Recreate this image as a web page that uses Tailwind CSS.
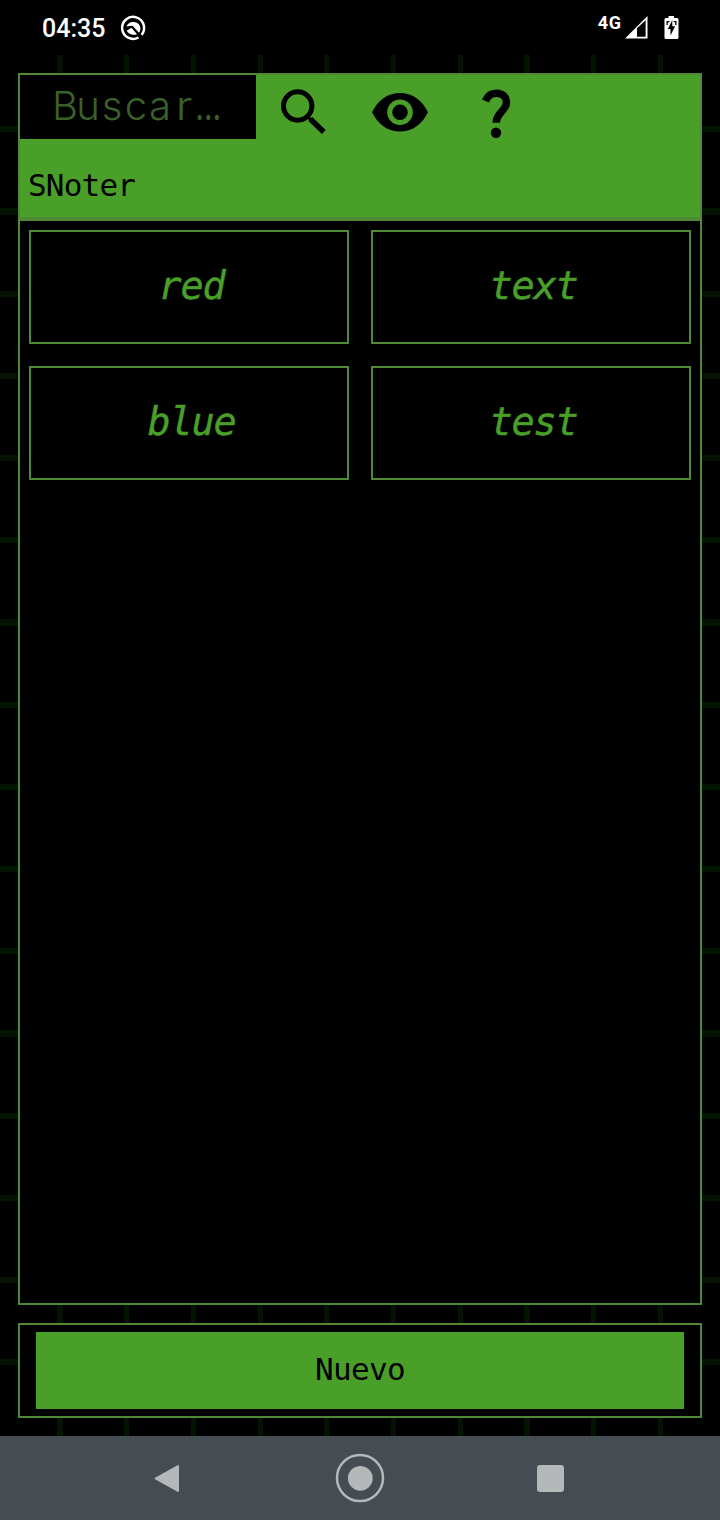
<!DOCTYPE html>
<html lang="es">
<head>
<meta charset="utf-8">
<title>SNoter</title>
<script src="https://cdn.jsdelivr.net/npm/@tailwindcss/browser@4"></script>
</head>
<body class="bg-black">
<div class="flex h-[1520px] w-[720px] flex-col overflow-hidden bg-black font-['DejaVu_Sans_Mono',monospace]">
  <!-- Status bar -->
  <header class="flex h-[55px] shrink-0 items-center pr-[41px] pl-[42px] font-[Roboto,sans-serif] text-white">
    <span class="w-[63px] pt-[2px] text-[25px] leading-[55px] font-medium whitespace-nowrap">04:35</span>
    <svg class="ml-[14px] h-7 w-7" viewBox="0 0 28 28" fill="none" stroke="#fff">
      <path d="M22.600 20.900A11 11 0 1 0 19.500 23.500" stroke-width="2.500"/>
      <path d="M7.500 12.500A7.300 7.300 0 0 1 21.500 14.500Q21.300 17 20 18.800L13.500 11.800Z" fill="#fff" stroke="none"/>
      <path d="M7.600 16.800L12.500 13.800L18 20.200Q11.500 22.500 7.600 16.800Z" fill="#fff" stroke="none"/>
    </svg>
    <span class="mb-[9px] ml-auto text-[18px] leading-5 font-bold tracking-[0.600px]">4G</span>
    <svg class="ml-[3px] h-[23px] w-[23px]" viewBox="0 0 23 23"><path d="M0 22.500L22.500 0v22.500z" fill="#fff"/><path d="M12 12.200L20.600 4.300v16.400H12z" fill="#000"/></svg>
    <svg class="mr-[0.500px] ml-4 h-6 w-[15px]" viewBox="0 0 15 24"><path d="M4.500 0h5.500v2h3a1.500 1.500 0 0 1 1.500 1.500v18A1.500 1.500 0 0 1 13 23H2A1.500 1.500 0 0 1 .5 21.500v-18A1.500 1.500 0 0 1 2 2h2.500z" fill="#fff"/><path d="M8.300 4L3.800 13h2.700v6.500l4.600-9.200H8.300zM2.500 5h3v1.300H3.800V9H2.500zM9.800 5h2.700v4h-1.300V6.300H9.800z" fill="#000"/></svg>
  </header>

  <!-- App area over a grid backdrop -->
  <main class="flex min-h-0 flex-1 flex-col gap-[18px] bg-[repeating-linear-gradient(90deg,transparent_0_57.500px,#031400_57.500px_62.700px,transparent_62.700px_66.700px),repeating-linear-gradient(180deg,transparent_0_71.200px,#031400_71.200px_77.400px,transparent_77.400px_82.200px)] p-[18px]">
    <section class="flex min-h-0 flex-1 flex-col border-2 border-[#4f8836] bg-black">
      <div class="flex h-[146px] shrink-0 flex-col border-b-4 border-[#4f8836] bg-[#4a9f29]">
        <div class="flex h-16">
          <div class="flex w-[236px] bg-black pl-8 font-[Inter,sans-serif] text-[40px] leading-[62px] font-light text-[#3a6129]"><span class="w-6 text-center">B</span><span class="w-6 text-center">u</span><span class="w-6 text-center">s</span><span class="w-6 text-center">c</span><span class="w-6 text-center">a</span><span class="w-6 scale-x-115 text-center">r</span><span class="flex w-6 justify-center font-normal"><span class="scale-x-[0.750]">…</span></span></div>
          <svg class="ml-6 h-16 w-12" viewBox="280 75 48 64" fill="none" stroke="#000"><circle cx="297.700" cy="106" r="14.200" stroke-width="5"/><path d="M307 116l4 4" stroke-width="3"/><path d="M310.300 119l13.500 13" stroke-width="5.500"/></svg>
          <svg class="ml-10 h-16 w-16" viewBox="368 75 64 64"><path d="M372 112.300C378 100 388 93 400 93s22 7 28 19.300c-6 12.300-16 19.300-28 19.300s-22-7-28-19.300z"/><circle cx="400" cy="112.300" r="10.300" fill="none" stroke="#4a9f29" stroke-width="5"/></svg>
          <svg class="ml-11 h-16 w-10" viewBox="476 75 40 64"><path d="M485.500 101C487.500 96 491 93.200 496.300 93.200C502.500 93.200 506.500 97 506.500 102.500C506.500 111 496.300 112 496.300 122.700" fill="none" stroke="#000" stroke-width="7.600"/><circle cx="496" cy="132.800" r="5.200"/></svg>
        </div>
        <h1 class="pt-7 pl-2 text-[31px] leading-[37px] tracking-[-0.800px]">SNoter</h1>
      </div>
      <div class="grid grid-cols-2 gap-[22px] p-[9px] text-[38.500px] tracking-[-1.200px] text-[#4a9f29] italic [-webkit-text-stroke:0.400px_#4a9f29]">
        <div class="flex h-[114px] items-center justify-center border-2 border-[#4f8836] pb-0.5 pl-[5px]">red</div>
        <div class="flex h-[114px] items-center justify-center border-2 border-[#4f8836] pb-0.5 pl-[5px]">text</div>
        <div class="flex h-[114px] items-center justify-center border-2 border-[#4f8836] pb-0.5 pl-[5px]">blue</div>
        <div class="flex h-[114px] items-center justify-center border-2 border-[#4f8836] pb-0.5 pl-[5px]">test</div>
      </div>
    </section>
    <section class="flex h-[95px] shrink-0 border-2 border-[#4f8836] bg-black px-4 pt-[7px] pb-[7px]">
      <button class="flex-1 bg-[#4a9f29] pb-0.5 text-[31px] leading-[75px] tracking-[-0.700px] text-black">Nuevo</button>
    </section>
  </main>

  <!-- Navigation bar -->
  <nav class="flex h-[84px] shrink-0 items-center bg-[#454c52]">
    <svg class="ml-[153px] h-[30px] w-7" viewBox="0 0 28 30"><path d="M2.500 15.500L25 3v25z" fill="#b4b8b9" stroke="#b4b8b9" stroke-width="2" stroke-linejoin="round"/></svg>
    <svg class="ml-[154px] h-[50px] w-[50px]" viewBox="0 0 50 50"><circle cx="25" cy="25" r="23" fill="none" stroke="#b4b8b9" stroke-width="2.500"/><circle cx="25.300" cy="25.300" r="12.400" fill="#b4b8b9"/></svg>
    <div class="mt-px ml-[152px] h-[27px] w-[27px] rounded-[3px] bg-[#b4b8b9]"></div>
  </nav>
</div>
</body>
</html>
